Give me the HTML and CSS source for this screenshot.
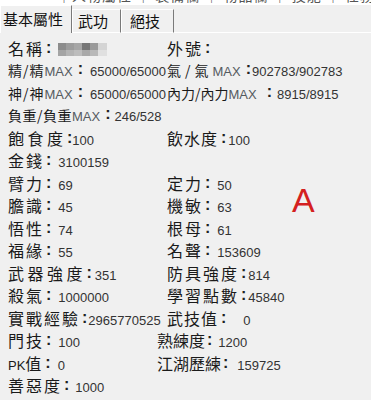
FILE: index.html
```html
<!DOCTYPE html>
<html lang="zh-Hant">
<head>
  <meta charset="UTF-8">
  <title>基本屬性</title>
  <link rel="stylesheet" href="styles.css">
</head>
<body>
  <div class="topbar"><div class="topbar-text">｜人物屬性 ｜ 裝備欄 ｜ 物品欄 ｜ 技能 ｜ 任務 ｜ 幫派 ｜ 系統</div></div>

  <div class="tabs">
    <div class="tab tab-first active">基本屬性</div>
    <div class="tab tab-second">武功</div>
    <div class="tab tab-third">絕技</div>
    <div class="tab-fill"></div>
  </div>

  <div class="stats">
    <div class="row">
      <div class="cell"><span class="lb">名稱</span><span class="c">:</span><span class="mosaic"></span></div>
      <div class="cell"><span class="lb">外號</span><span class="c">:</span></div>
    </div>
    <div class="row">
      <div class="cell"><span class="lb sm s1">精/精</span><span class="mx">MAX</span><span class="c">:</span><span class="v">65000/65000</span></div>
      <div class="cell"><span class="lb sm s4">氣/氣</span><span class="mx">MAX</span><span class="c">:</span><span class="v m1">902783/902783</span></div>
    </div>
    <div class="row">
      <div class="cell"><span class="lb sm s1">神/神</span><span class="mx">MAX</span><span class="c">:</span><span class="v">65000/65000</span></div>
      <div class="cell"><span class="lb sm s0">內力/內力</span><span class="mx">MAX</span><span class="c far">:</span><span class="v m5">8915/8915</span></div>
    </div>
    <div class="row">
      <div class="cell"><span class="lb sm s05">負重/負重</span><span class="mx">MAX</span><span class="c">:</span><span class="v m4">246/528</span></div>
      <div class="cell"></div>
    </div>
    <div class="row">
      <div class="cell"><span class="lb w35">飽食度</span><span class="c">:</span><span class="v m0">100</span></div>
      <div class="cell"><span class="lb n1">飲水度</span><span class="c">:</span><span class="v m2">100</span></div>
    </div>
    <div class="row">
      <div class="cell"><span class="lb">金錢</span><span class="c">:</span><span class="v">3100159</span></div>
      <div class="cell"></div>
    </div>
    <div class="row">
      <div class="cell"><span class="lb">臂力</span><span class="c">:</span><span class="v">69</span></div>
      <div class="cell"><span class="lb">定力</span><span class="c">:</span><span class="v">50</span></div>
    </div>
    <div class="row">
      <div class="cell"><span class="lb">膽識</span><span class="c">:</span><span class="v">45</span></div>
      <div class="cell"><span class="lb">機敏</span><span class="c">:</span><span class="v">63</span></div>
    </div>
    <div class="row">
      <div class="cell"><span class="lb">悟性</span><span class="c">:</span><span class="v">74</span></div>
      <div class="cell"><span class="lb">根母</span><span class="c">:</span><span class="v">61</span></div>
    </div>
    <div class="row">
      <div class="cell"><span class="lb">福緣</span><span class="c">:</span><span class="v">55</span></div>
      <div class="cell"><span class="lb">名聲</span><span class="c">:</span><span class="v">153609</span></div>
    </div>
    <div class="row">
      <div class="cell"><span class="lb w35">武器強度</span><span class="c">:</span><span class="v m3">351</span></div>
      <div class="cell"><span class="lb">防具強度</span><span class="c">:</span><span class="v m2">814</span></div>
    </div>
    <div class="row">
      <div class="cell"><span class="lb">殺氣</span><span class="c">:</span><span class="v">1000000</span></div>
      <div class="cell"><span class="lb">學習點數</span><span class="c">:</span><span class="v m2">45840</span></div>
    </div>
    <div class="row">
      <div class="cell"><span class="lb">實戰經驗</span><span class="c">:</span><span class="v m1">2965770525</span></div>
      <div class="cell"><span class="lb n1">武技值</span><span class="c">:</span><span class="v m17">0</span></div>
    </div>
    <div class="row">
      <div class="cell"><span class="lb">門技</span><span class="c">:</span><span class="v">100</span></div>
      <div class="cell shift"><span class="lb n0">熟練度</span><span class="c">:</span><span class="v m6">1200</span></div>
    </div>
    <div class="row">
      <div class="cell"><span class="pk">PK</span><span class="lb">值</span><span class="c">:</span><span class="v">0</span></div>
      <div class="cell shift"><span class="lb n0">江湖歷練</span><span class="c">:</span><span class="v m9">159725</span></div>
    </div>
    <div class="row">
      <div class="cell"><span class="lb">善惡度</span><span class="c">:</span><span class="v m6">1000</span></div>
      <div class="cell"></div>
    </div>
  </div>

  <div class="mark">A</div>
</body>
</html>
```

FILE: styles.css
```css
body {
  margin: 0;
  background-color: #f0f0f0;
  font-family: "Liberation Sans", "Noto Sans CJK TC", sans-serif;
  color: #1c1c1c;
  position: relative;
  height: 400px;
  overflow: hidden;
}

/* 上の切れたバー */
.topbar {
  height: 5px;
  background: #ffffff;
  overflow: hidden;
  padding-left: 57px;
}

.topbar-text {
  margin-top: -12px;
  font-family: "Noto Sans CJK TC", sans-serif;
  font-size: 14px;
  line-height: 14px;
  color: #555;
  white-space: nowrap;
  letter-spacing: 1px;
}

/* タブ */
.tabs {
  display: flex;
  align-items: flex-end;
  height: 28px;
}

.tab {
  box-sizing: border-box;
  height: 24px;
  line-height: 22px;
  font-family: "Noto Sans CJK TC", sans-serif;
  font-size: 15px;
  color: #111;
  border-top: 1px solid #ffffff;
  border-left: 1px solid #ffffff;
  border-right: 1px solid #7a7a7a;
  border-bottom: 1px solid #ffffff;
  white-space: nowrap;
}

.tab.active {
  height: 28px;
  line-height: 25px;
  border-bottom: none;
}

.tab-first {
  width: 72px;
  padding-left: 2px;
}

.tab-second {
  width: 49px;
  padding-left: 5px;
}

.tab-third {
  width: 53px;
  padding-left: 8px;
}

.tab-fill {
  flex: 1;
  border-bottom: 1px solid #ffffff;
}

/* ステータス */
.stats {
  padding: 3.75px 0 0 8px;
}

.row {
  display: grid;
  grid-template-columns: 159px 1fr;
  height: 22.5px;
  line-height: 22.5px;
  white-space: nowrap;
}

.cell {
  display: flex;
  align-items: baseline;
}

.cell.shift {
  margin-left: -10px;
}

.lb {
  font-family: "Noto Sans CJK TC", sans-serif;
  font-size: 16px;
  letter-spacing: 2px;
  color: #1a1a1a;
}

.lb.w35 { letter-spacing: 3.5px; }
.lb.n1 { letter-spacing: 1px; }
.lb.n0 { letter-spacing: 0; }

/* MAX の行は小さめ */
.lb.sm { font-size: 14px; }
.lb.s0 { letter-spacing: 0; }
.lb.s05 { letter-spacing: 0.5px; }
.lb.s1 { letter-spacing: 1px; }
.lb.s4 { letter-spacing: 4px; }

.pk {
  font-size: 13px;
  color: #1a1a1a;
}

.mx {
  font-size: 13px;
  color: #555a60;
}

/* コロン（ラベルの後ろの余白を吸収） */
.c {
  font-size: 16px;
  font-weight: bold;
  color: #222;
  margin-left: 2px;
  transform: translateY(-2px);
}

.lb.w35 + .c { margin-left: 0.5px; }
.lb.n1 + .c { margin-left: 3px; }
.lb.n0 + .c { margin-left: 2px; }
.mx + .c { margin-left: 5px; }
.mx + .c.far { margin-left: 10px; }

.v {
  font-size: 13px;
  color: #333;
  margin-left: 7px;
}

.v.m0 { margin-left: 0; }
.v.m1 { margin-left: 1px; }
.v.m2 { margin-left: 2px; }
.v.m3 { margin-left: 3px; }
.v.m4 { margin-left: 4px; }
.v.m5 { margin-left: 5px; }
.v.m6 { margin-left: 6px; }
.v.m9 { margin-left: 9px; }
.v.m17 { margin-left: 17px; }

.mosaic {
  align-self: center;
  width: 49px;
  height: 13px;
  margin-left: 7px;
  background:
    linear-gradient(to right, #8c8c8c 0 8px, #9c9c9c 8px 16px, #a6a6a6 16px 24px, #767676 24px 32px, #9a9a9a 32px 40px, #d4d4d4 40px) top / 100% 7px no-repeat,
    linear-gradient(to right, #a4a4a4 0 8px, #b4b4b4 8px 16px, #bdbdbd 16px 24px, #a9a9a9 24px 32px, #b8b8b8 32px 40px, #e0e0e0 40px) bottom / 100% 6px no-repeat;
}

/* 赤い注記 */
.mark {
  position: absolute;
  left: 292px;
  top: 182.5px;
  font-size: 34px;
  line-height: 34px;
  color: #d42020;
}
```
